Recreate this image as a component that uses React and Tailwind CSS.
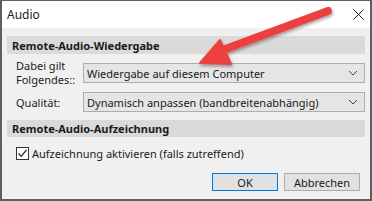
function Chevron() {
  return (
    <svg width="10" height="6" viewBox="0 0 10 6" className="shrink-0">
      <path d="M1 1 L5 5 L9 1" fill="none" stroke="#444" strokeWidth="1" />
    </svg>
  );
}

function Select({ value }) {
  return (
    <div className="flex-1 h-[20px] flex items-center justify-between bg-[#e5e5e5] border border-[#adadad] pl-[3px] pr-[6px] text-[11px] leading-none text-[#1a1a1a]">
      <span>{value}</span>
      <Chevron />
    </div>
  );
}

function Arrow() {
  return (
    <svg
      className="absolute left-0 top-0 pointer-events-none"
      width="372"
      height="201"
      viewBox="0 0 372 201"
    >
      <defs>
        <filter id="sh" x="-20%" y="-20%" width="140%" height="140%">
          <feDropShadow dx="1" dy="2" stdDeviation="1.5" floodColor="#000" floodOpacity="0.35" />
        </filter>
      </defs>
      <g filter="url(#sh)">
        <line x1="326" y1="10" x2="218" y2="50" stroke="#ec4141" strokeWidth="8" strokeLinecap="round" />
        <polygon points="198,62 218,39 229,63" fill="#ec4141" strokeLinejoin="round" stroke="#ec4141" strokeWidth="2" />
      </g>
    </svg>
  );
}

export default function App() {
  return (
    <div
      className="relative w-[372px] h-[201px] flex flex-col border-2 border-t border-[#5f5f5f] bg-[#f0f0f0] text-[#1a1a1a] overflow-hidden leading-none"
      style={{ fontFamily: '"Noto Sans", "Open Sans", sans-serif' }}
    >
      <div className="h-[27px] bg-white flex items-center justify-between pl-[5px] pr-[6px] shrink-0">
        <span className="text-[12px]">Audio</span>
        <svg width="11" height="11" viewBox="0 0 11 11">
          <path d="M0.5 0.5 L10.5 10.5 M10.5 0.5 L0.5 10.5" stroke="#222" strokeWidth="1" />
        </svg>
      </div>

      <div className="flex-1 flex flex-col px-[5px]">
        <div className="mt-[8px] h-[18px] bg-[#dadada] flex items-center pl-[5px] text-[11px] font-bold">
          Remote-Audio-Wiedergabe
        </div>

        <div className="mt-[9px] h-[20px] flex items-center pl-[9px]">
          <div className="w-[67px] text-[11px] leading-[14px]">
            Dabei gilt
            <br />
            Folgendes::
          </div>
          <Select value="Wiedergabe auf diesem Computer" />
        </div>

        <div className="mt-[9px] h-[20px] flex items-center pl-[9px]">
          <div className="w-[67px] text-[11px]">Qualität:</div>
          <Select value="Dynamisch anpassen (bandbreitenabhängig)" />
        </div>

        <div className="mt-[8px] h-[17px] bg-[#dadada] flex items-center pl-[5px] text-[11px] font-bold">
          Remote-Audio-Aufzeichnung
        </div>

        <div className="mt-[10px] h-[13px] flex items-center pl-[9px] gap-[3px]">
          <div className="w-[13px] h-[13px] border border-[#333] bg-white flex items-center justify-center">
            <svg width="11" height="11" viewBox="0 0 11 11">
              <path d="M1.5 5.5 L4.2 8.3 L9.5 2" fill="none" stroke="#222" strokeWidth="1.2" />
            </svg>
          </div>
          <span className="text-[11px]">Aufzeichnung aktivieren (falls zutreffend)</span>
        </div>

        <div className="mt-[13px] flex justify-end gap-[6px] pr-[5px]">
          <button className="w-[66px] h-[18px] bg-[#e1e1e1] border border-[#0078d7] text-[11px] leading-none flex items-center justify-center">
            OK
          </button>
          <button className="w-[76px] h-[18px] bg-[#e1e1e1] border border-[#adadad] text-[11px] leading-none flex items-center justify-center">
            Abbrechen
          </button>
        </div>
      </div>

      <Arrow />
    </div>
  );
}
